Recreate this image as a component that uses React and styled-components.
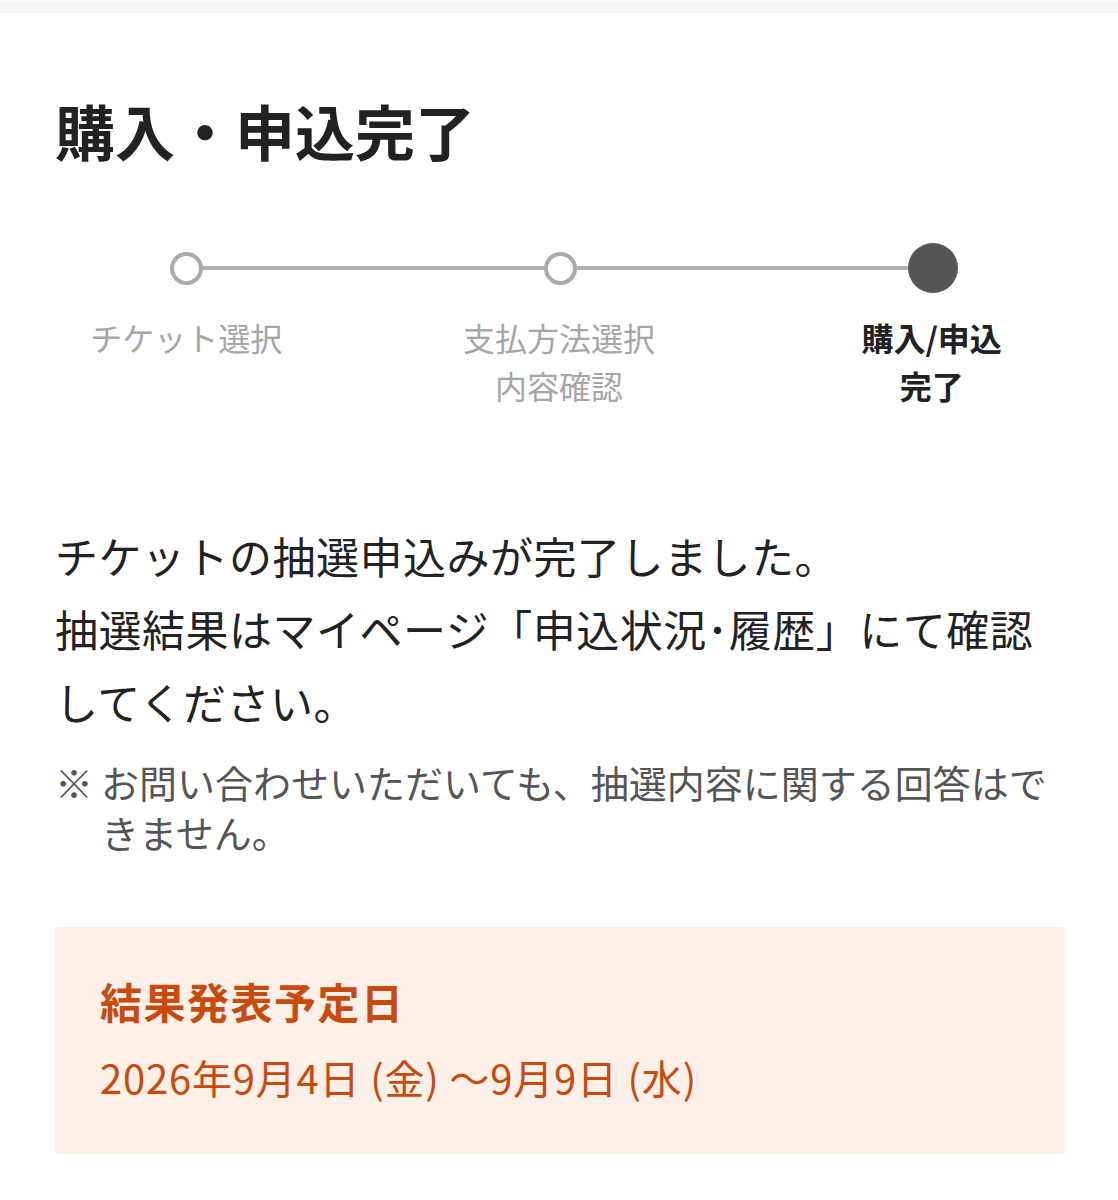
import React from "react";
import styled, { createGlobalStyle } from "styled-components";

const GlobalStyle = createGlobalStyle`
  html, body {
    margin: 0;
    padding: 0;
    background: #ffffff;
  }
  body {
    font-family: "Noto Sans CJK JP", "Noto Sans", sans-serif;
    color: #222222;
  }
  * { box-sizing: border-box; }
`;

const Page = styled.div`
  width: 1118px;
  min-height: 1200px;
  background: #ffffff;
`;

const HeaderEdge = styled.div`
  height: 13px;
  background: #f5f5f5;
  border-top: 2px solid #fbfbfb;
`;

const Section = styled.section`
  padding: 0 53px 0 55px;
`;

const Title = styled.h1`
  margin: 81px 0 0;
  padding: 0 55px;
  font-size: 60px;
  line-height: 72px;
  font-weight: 700;
  color: #222222;
  letter-spacing: 0;
`;

const Track = styled.div`
  display: flex;
  align-items: center;
  height: 50px;
  margin-top: 77px;
  padding: 0 160px 0 170px;
`;

const Ring = styled.span`
  flex: none;
  width: 33px;
  height: 33px;
  border-radius: 50%;
  border: 4px solid #aaaaaa;
  background: #ffffff;
`;

const Dot = styled.span`
  flex: none;
  width: 50px;
  height: 50px;
  border-radius: 50%;
  background: #555555;
`;

const Connector = styled.span`
  flex: ${(p) => p.$grow};
  height: 4px;
  background: #b0b0b0;
`;

const Labels = styled.div`
  display: grid;
  grid-template-columns: repeat(3, 1fr);
  margin-top: 20px;
`;

const Label = styled.div`
  text-align: center;
  font-size: 32px;
  line-height: 48px;
  font-weight: ${(p) => (p.$current ? 700 : 400)};
  color: ${(p) => (p.$current ? "#222222" : "#a6a6a6")};
`;

const Message = styled.p`
  margin: 110px 0 0;
  font-size: 43px;
  line-height: 73px;
  letter-spacing: 0.5px;
  white-space: nowrap;
  color: #222222;
`;

const Note = styled.div`
  display: flex;
  margin-top: 19px;
  font-size: 38px;
  line-height: 50px;
  color: #555555;
`;

const NoteMark = styled.span`
  flex: none;
  width: 46px;
`;

const NoteText = styled.span`
  flex: 1;
`;

const ResultBox = styled.div`
  margin-top: 70px;
  background: #fdf0e9;
  padding: 42px 45px 47px;
  color: #c84b0d;
`;

const ResultHeading = styled.h2`
  margin: 0;
  font-size: 42px;
  line-height: 63px;
  font-weight: 700;
  letter-spacing: 1.5px;
`;

const ResultDate = styled.div`
  margin-top: 15px;
  font-size: 40px;
  line-height: 60px;
  font-weight: 400;
  letter-spacing: 0.8px;
`;

const steps = [
  { label: ["チケット選択"] },
  { label: ["支払方法選択", "内容確認"] },
  { label: ["購入/申込", "完了"], current: true },
];

export default function App() {
  return (
    <Page>
      <GlobalStyle />
      <HeaderEdge />
      <Title>購入・申込完了</Title>

      <Track>
        <Ring />
        <Connector $grow={341} />
        <Ring />
        <Connector $grow={331} />
        <Dot />
      </Track>

      <Labels>
        {steps.map((s, i) => (
          <Label key={i} $current={s.current}>
            {s.label.map((line, j) => (
              <div key={j}>{line}</div>
            ))}
          </Label>
        ))}
      </Labels>

      <Section>
        <Message>
          チケットの抽選申込みが完了しました。
          <br />
          抽選結果はマイページ「申込状況･履歴」にて確認
          <br />
          してください。
        </Message>

        <Note>
          <NoteMark>※</NoteMark>
          <NoteText>お問い合わせいただいても、抽選内容に関する回答はできません。</NoteText>
        </Note>

        <ResultBox>
          <ResultHeading>結果発表予定日</ResultHeading>
          <ResultDate>2026年9月4日 (金) ～9月9日 (水)</ResultDate>
        </ResultBox>
      </Section>
    </Page>
  );
}
